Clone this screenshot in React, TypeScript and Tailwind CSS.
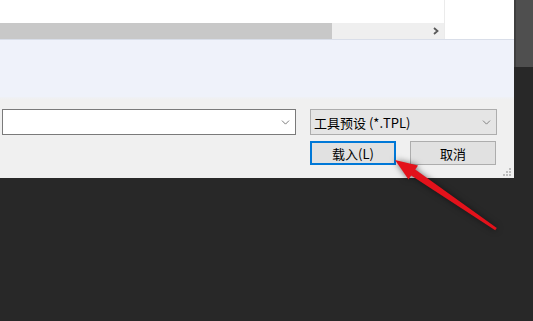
import { ChevronDown } from "lucide-react";

const font = { fontFamily: '"Noto Sans CJK SC", "Noto Sans", sans-serif' };

function SizeGrip() {
  return (
    <svg width="10" height="8" viewBox="0 0 10 8" className="block">
      {[
        [7, 0],
        [4, 3],
        [7, 3],
        [1, 6],
        [4, 6],
        [7, 6],
      ].map(([x, y]) => (
        <rect key={`${x}-${y}`} x={x} y={y} width="2" height="2" fill="#bdbdbd" />
      ))}
    </svg>
  );
}

function Arrow() {
  return (
    <svg
      width="533"
      height="321"
      viewBox="0 0 533 321"
      className="absolute inset-0 pointer-events-none"
      style={{ filter: "drop-shadow(0 0 3px rgba(0,0,0,0.55))" }}
    >
      <polygon points="409,165 496.8,228 495.2,230.2 405,171.5" fill="#e3121b" />
      <polygon points="395,160 418,165.5 408.5,179.5" fill="#e3121b" />
    </svg>
  );
}

export default function App() {
  return (
    <div className="relative w-[533px] h-[321px] bg-[#282828] overflow-hidden" style={font}>
      <div className="flex">
        {/* dialog */}
        <div className="w-[514px] h-[178px] flex flex-col bg-[#f0f0f0]">
          <div className="flex h-[39px] bg-white">
            <div className="w-[444px] flex flex-col">
              <div className="h-[23px] bg-white" />
              <div className="h-[16px] flex bg-[#efefef]">
                <div className="w-[332px] bg-[#c8c8c8]" />
                <div className="flex-1 flex items-center justify-end pr-[5px]">
                  <svg width="6" height="8" viewBox="0 0 6 8">
                    <path d="M1 1 L4.5 4 L1 7" fill="none" stroke="#5a5a5a" strokeWidth="1.8" />
                  </svg>
                </div>
              </div>
            </div>
            <div className="w-px bg-[#ebebeb]" />
            <div className="flex-1 bg-white" />
          </div>
          <div className="h-px bg-[#d9dee9]" />
          <div className="h-[57px] bg-[#eff2fa]" />
          <div className="flex-1 flex flex-col pl-[2px] pt-[12px] bg-gradient-to-b from-[#eff1f6] from-0% to-[#f0f0f0] to-[3%]">
            <div className="flex items-center h-[26px]">
              <div className="w-[294px] h-[26px] bg-white border border-[#7a7a7a] flex items-center justify-end pr-[3px]">
                <ChevronDown size={13} strokeWidth={1.4} color="#555" />
              </div>
              <div className="ml-[14px] w-[187px] h-[26px] bg-[#e5e5e5] border border-[#adadad] flex items-center justify-between pl-[3px] pr-[3px] text-[13px] text-black">
                <span className="leading-none">工具预设 (*.TPL)</span>
                <ChevronDown size={13} strokeWidth={1.4} color="#666" />
              </div>
            </div>
            <div className="flex mt-[6px] ml-[308px] gap-[14px]">
              <button className="w-[86px] h-[24px] bg-[#e1e1e1] border-2 border-[#0078d7] text-[13px] leading-none text-black flex items-center justify-center">
                载入(L)
              </button>
              <button className="w-[86px] h-[24px] bg-[#e1e1e1] border border-[#adadad] text-[13px] leading-none text-black flex items-center justify-center">
                取消
              </button>
            </div>
            <div className="flex-1 flex items-end justify-end pr-[2px] pb-[2px]">
              <SizeGrip />
            </div>
          </div>
        </div>
        {/* right strip */}
        <div className="flex-1 flex flex-col">
          <div className="h-[67px] bg-[#4f4f4f] border-l-2 border-[#3f3f3f]" />
        </div>
      </div>
      <Arrow />
    </div>
  );
}
